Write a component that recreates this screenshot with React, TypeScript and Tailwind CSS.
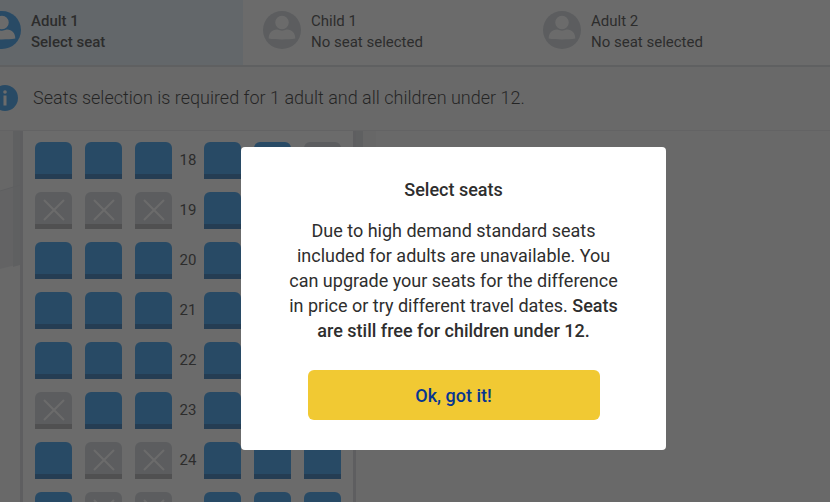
import { useState } from 'react'
import { clsx } from 'clsx'

interface Passenger {
  name: string
  status: string
  active?: boolean
}

interface SeatRow {
  row: number
  // one character per seat: o = available, x = taken
  left: string
  right: string
}

const passengers: Passenger[] = [
  { name: 'Adult 1', status: 'Select seat', active: true },
  { name: 'Child 1', status: 'No seat selected' },
  { name: 'Adult 2', status: 'No seat selected' },
]

const seatRows: SeatRow[] = [
  { row: 18, left: 'ooo', right: 'oox' },
  { row: 19, left: 'xxx', right: 'ooo' },
  { row: 20, left: 'ooo', right: 'ooo' },
  { row: 21, left: 'ooo', right: 'ooo' },
  { row: 22, left: 'ooo', right: 'ooo' },
  { row: 23, left: 'xoo', right: 'ooo' },
  { row: 24, left: 'oxx', right: 'ooo' },
  { row: 25, left: 'oxx', right: 'ooo' },
]

function PassengerTab({ name, status, active }: Passenger) {
  return (
    <button
      type="button"
      className={clsx(
        'flex w-[280px] shrink-0 items-start gap-[10px] pt-[11px] pl-5 text-left text-[15px] leading-[21px] text-[#2e2e2e]',
        active && 'bg-[#e3f1fc] font-medium'
      )}
    >
      <svg
        viewBox="0 0 38 38"
        className={clsx('size-[38px] shrink-0', active ? 'text-[#2091eb]' : 'text-[#cbd0d6]')}
        aria-hidden="true"
      >
        <circle cx="19" cy="19" r="19" fill="currentColor" />
        <path d="M5.700 27.500C5.700 22 9 18.800 14 18.500h10c5 .3 8.300 3.500 8.300 9-8 1.200-18.600 1.200-26.600 0z" fill="#fff" />
        <circle cx="19" cy="11.500" r="7.500" fill="#fff" stroke="currentColor" strokeWidth="1.500" />
      </svg>
      <span className="flex flex-col">
        <span>{name}</span>
        <span>{status}</span>
      </span>
    </button>
  )
}

function Seat({ label, taken }: { label: string; taken: boolean }) {
  return (
    <button
      type="button"
      aria-label={label}
      disabled={taken}
      className={clsx(
        'flex h-[37px] w-[37px] flex-col overflow-hidden rounded-t-md',
        taken ? 'bg-[#cbd0d6]' : 'bg-[#2091eb]'
      )}
    >
      <span className="flex flex-1 items-center justify-center">
        {taken && (
          <svg viewBox="0 0 22 22" className="mt-1 ml-px size-[22px]" fill="none" stroke="#fff" strokeWidth="2" aria-hidden="true">
            <path d="M1 1l20 20M21 1L1 21" />
          </svg>
        )}
      </span>
      <span className={clsx('h-[5px] w-full', taken ? 'bg-[#a4a6a8]' : 'bg-[#1467b0]')} />
    </button>
  )
}

function SeatGroup({ row, seats, letters }: { row: number; seats: string; letters: string }) {
  return (
    <div className="flex gap-[13px]">
      {seats.split('').map((seat, i) => (
        <Seat key={i} label={`Seat ${row}${letters[i]}`} taken={seat === 'x'} />
      ))}
    </div>
  )
}

function Wing({ className }: { className?: string }) {
  return (
    <svg viewBox="0 0 20 140" className={clsx('h-[140px] w-5 shrink-0', className)} aria-hidden="true">
      <path d="M0 0h20v54L0 60z" fill="#f0f1f2" />
      <path d="M0 60l20-6v79L0 138z" fill="#e4e5e8" />
      <path d="M13 0h7v134l-7 2z" fill="#d8dade" />
      <path d="M0 60l20-6" stroke="#d2d4d9" />
    </svg>
  )
}

export default function App() {
  const [open, setOpen] = useState(true)

  return (
    <div className="h-screen overflow-hidden bg-[#f9f9f9] font-[Roboto,'Liberation_Sans',sans-serif]">
      {/* Passengers */}
      <div className="border-b-2 border-[#d8d9dc] bg-white">
        <nav className="-ml-[37px] flex h-[65px]">
          {passengers.map((p) => (
            <PassengerTab key={p.name} {...p} />
          ))}
        </nav>
      </div>

      {/* Notice */}
      <div className="-ml-2 flex h-16 items-center gap-[15px] border-b border-[#e4e5e8] bg-[#f9f9f9] pb-px text-lg text-[#111]">
        <svg viewBox="0 0 26 26" className="size-[26px] shrink-0" aria-hidden="true">
          <circle cx="13" cy="13" r="13" fill="#2091eb" />
          <circle cx="13" cy="7" r="1.800" fill="#fff" />
          <path d="M11.500 10.500h3v10h-3z" fill="#fff" />
        </svg>
        <p className="font-light">Seats selection is required for 1 adult and all children under 12.</p>
      </div>

      {/* Cabin */}
      <div className="flex">
        <Wing />
        <div className="border-x-[3px] border-[#d2d4d9] bg-white px-3 pt-[11px]">
          {seatRows.map(({ row, left, right }) => (
            <div key={row} className="mb-[13px] flex items-start">
              <SeatGroup row={row} seats={left} letters="ABC" />
              <span className="w-8 text-center text-[15px] leading-9 text-[#2e2e2e]">{row}</span>
              <SeatGroup row={row} seats={right} letters="DEF" />
            </div>
          ))}
        </div>
        <Wing className="-scale-x-100" />
      </div>

      {open && (
        <div className="fixed inset-0 flex items-start justify-center bg-[#2c2c2c]/70 pt-[147px] pl-[77px]">
          <div
            role="dialog"
            aria-modal="true"
            aria-labelledby="dialog-title"
            className="flex w-[425px] flex-col items-center rounded bg-white px-12 py-[30px] text-center text-[#2e2e2e]"
          >
            <h2 id="dialog-title" className="text-lg leading-[25px] font-medium">Select seats</h2>
            <p className="mt-4 text-lg leading-[25px]">
              Due to high demand standard seats included for adults are unavailable. You can upgrade your seats for the difference in price or try different travel dates.{' '}
              <strong className="font-medium">Seats are still free for children under 12.</strong>
            </p>
            <button
              type="button"
              onClick={() => setOpen(false)}
              className="mt-[27px] h-[50px] w-[292px] rounded-md bg-[#f1c933] pt-px text-lg font-medium text-[#073590]"
            >
              Ok, got it!
            </button>
          </div>
        </div>
      )}
    </div>
  )
}
